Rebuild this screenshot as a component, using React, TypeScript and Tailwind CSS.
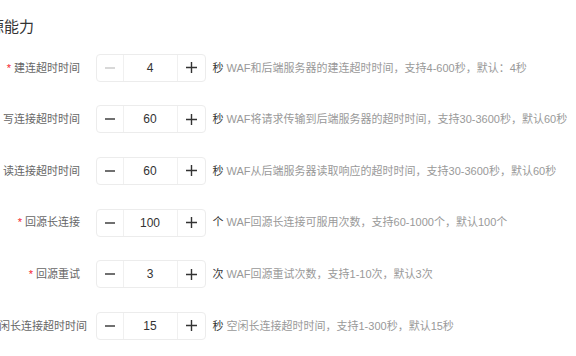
import React from 'react';

type Row = {
  label: string;
  required?: boolean;
  value: string;
  minDisabled?: boolean;
  unit: string;
  desc: string;
};

const rows: Row[] = [
  { label: '建连超时时间', required: true, value: '4', minDisabled: true, unit: '秒', desc: 'WAF和后端服务器的建连超时时间，支持4-600秒，默认：4秒' },
  { label: '写连接超时时间', value: '60', unit: '秒', desc: 'WAF将请求传输到后端服务器的超时时间，支持30-3600秒，默认60秒' },
  { label: '读连接超时时间', value: '60', unit: '秒', desc: 'WAF从后端服务器读取响应的超时时间，支持30-3600秒，默认60秒' },
  { label: '回源长连接', required: true, value: '100', unit: '个', desc: 'WAF回源长连接可服用次数，支持60-1000个，默认100个' },
  { label: '回源重试', required: true, value: '3', unit: '次', desc: 'WAF回源重试次数，支持1-10次，默认3次' },
  { label: '空闲长连接超时时间', value: '15', unit: '秒', desc: '空闲长连接超时时间，支持1-300秒，默认15秒' },
];

const Minus = ({ disabled }: { disabled?: boolean }) => (
  <svg width="10" height="10" viewBox="0 0 10 10" className={disabled ? 'text-[#c8c8c8]' : 'text-[#333]'}>
    <path d="M0 5h10" stroke="currentColor" strokeWidth="1.4" />
  </svg>
);

const Plus = () => (
  <svg width="11" height="11" viewBox="0 0 11 11" className="text-[#333]">
    <path d="M0 5.5h11M5.5 0v11" stroke="currentColor" strokeWidth="1.4" />
  </svg>
);

const Stepper = ({ value, minDisabled }: { value: string; minDisabled?: boolean }) => (
  <div className="flex h-[28px] w-[110px] shrink-0 rounded-[4px] border border-[#ececec] bg-white">
    <div className="flex w-[27px] items-center justify-center border-r border-[#f0f0f0]">
      <Minus disabled={minDisabled} />
    </div>
    <div className="flex flex-1 items-center justify-center text-[12px] text-[#333]">{value}</div>
    <div className="flex w-[28px] items-center justify-center border-l border-[#f0f0f0]">
      <Plus />
    </div>
  </div>
);

const App: React.FC = () => {
  return (
    <div
      className="h-[356px] w-[576px] overflow-hidden bg-white"
      style={{ fontFamily: '"Liberation Sans", "Noto Sans CJK SC", sans-serif' }}
    >
      <div className="-ml-[26px] pt-[16px] text-[15px] leading-[22px] text-[#333]">回源能力</div>
      <div className="-ml-[12px] pt-[4px]">
        {rows.map((r) => (
          <div key={r.label} className="flex h-[51.6px] items-center">
            <div className="w-[92px] shrink-0 whitespace-nowrap text-right text-[11px] text-[#666]">
              {r.required && <span className="mr-[3px] text-[#f5222d]">*</span>}
              {r.label}
            </div>
            <div className="ml-[15.5px]">
              <Stepper value={r.value} minDisabled={r.minDisabled} />
            </div>
            <div className="ml-[7px] whitespace-nowrap text-[11px]">
              <span className="text-[#333]">{r.unit}</span>
              <span className="ml-[3px] text-[#999]">{r.desc}</span>
            </div>
          </div>
        ))}
      </div>
    </div>
  );
};

export default App;
